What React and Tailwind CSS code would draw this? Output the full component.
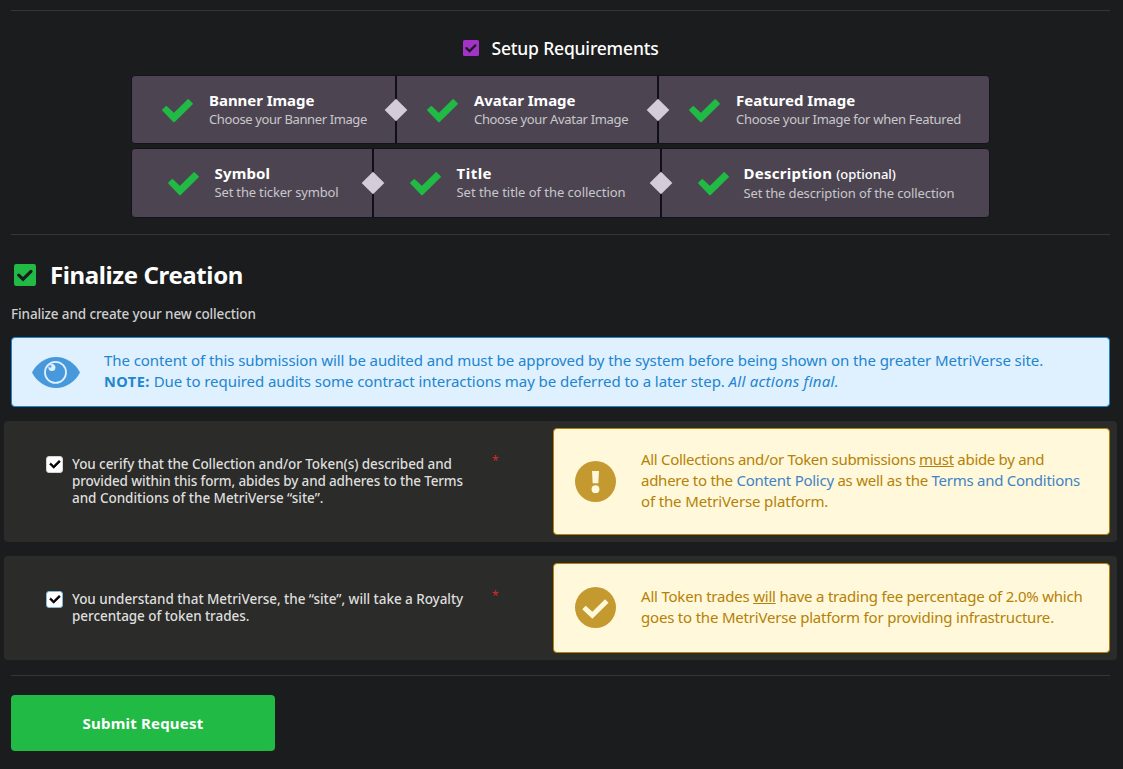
import React from "react";

const bannerSteps = [
  { title: "Banner Image", text: "Choose your Banner Image", spacing: "tracking-[-0.39px]", titleSpacing: "tracking-[-0.04px]" },
  { title: "Avatar Image", text: "Choose your Avatar Image", spacing: "tracking-[-0.34px]", titleSpacing: "tracking-[-0.04px]" },
  { title: "Featured Image", text: "Choose your Image for when Featured", spacing: "tracking-[-0.3px]", titleSpacing: "tracking-[0.02px]" },
];

const detailSteps = [
  { title: "Symbol", text: "Set the ticker symbol", spacing: "tracking-[-0.17px]", titleSpacing: "tracking-[0.15px]", offset: "mb-[2px]" },
  { title: "Title", text: "Set the title of the collection", spacing: "tracking-[-0.04px]", titleSpacing: "tracking-[0.5px]", offset: "mb-[2px]" },
  { title: "Description", optional: true, text: "Set the description of the collection", spacing: "tracking-[-0.12px]", titleSpacing: "tracking-[0.25px]", offset: "-ml-px" },
];

function Check({ className }) {
  return (
    <svg viewBox="0 0 31 24" className={`shrink-0 ${className}`}>
      <path
        d="M1.2 11 4.2 8.1 11.9 15.3 26.2 1.1 29.8 4.7 12 22.2z"
        fill="currentColor"
        stroke="currentColor"
        strokeWidth="2"
        strokeLinejoin="round"
      />
    </svg>
  );
}

function CheckSquare({ className }) {
  return (
    <svg viewBox="0 0 22 22" className={`shrink-0 ${className}`}>
      <rect width="22" height="22" rx="2.2" fill="currentColor" />
      <path d="M4.7 11.2 9 15.2 17 7.4" fill="none" stroke="#1b1c1d" strokeWidth="3.2" strokeLinecap="round" />
    </svg>
  );
}

function EyeIcon() {
  return (
    <svg viewBox="0 0 48 31" className="h-[31px] w-12 shrink-0">
      <path d="M0 15.5C5 6 14 0 24 0s19 6 24 15.5C43 25 34 31 24 31S5 25 0 15.5z" fill="#4799db" />
      <circle cx="23.5" cy="15.4" r="10.5" fill="none" stroke="#dff0ff" strokeWidth="1.8" />
      <circle cx="19.9" cy="10.6" r="3.5" fill="#dff0ff" />
      <circle cx="18.2" cy="9.4" r="1.2" fill="#4799db" />
    </svg>
  );
}

function ExclamationCircle() {
  return (
    <svg viewBox="0 0 41 41" className="size-[41px] shrink-0">
      <circle cx="20.5" cy="20.5" r="20.5" fill="#c49a30" />
      <path d="M17 10h7l-.7 12.3h-5.6z" fill="#fff8db" />
      <circle cx="20.5" cy="28.2" r="3.9" fill="#fff8db" />
    </svg>
  );
}

function CheckCircle() {
  return (
    <svg viewBox="0 0 41 41" className="size-[41px] shrink-0">
      <circle cx="20.5" cy="20.5" r="20.5" fill="#c49a30" />
      <path d="M9 20.5 17.3 28.2 31.8 14" fill="none" stroke="#fff8db" strokeWidth="5" />
    </svg>
  );
}

function Steps({ steps, className }) {
  return (
    <div className={`grid w-[859px] rounded-[4px] border border-[#14131c] bg-[#4c4551] ${className}`}>
      {steps.map((step, i) => (
        <div
          key={step.title}
          className={`relative flex items-center whitespace-nowrap ${i < 2 ? "border-r-2 border-[#100e18]" : ""}`}
        >
          <Check className="mt-[2px] mr-4 h-6 w-[31px] text-[#21ba45]" />
          <div className={step.offset}>
            <div className="text-[15px] leading-[19px] font-bold text-white">
              <span className={step.titleSpacing}>{step.title}</span>
              {step.optional && <span className="ml-1 text-[13px] font-medium">(optional)</span>}
            </div>
            <div className={`text-[13px] leading-[18px] text-[#c9c7cb] ${step.spacing}`}>{step.text}</div>
          </div>
          {i < 2 && (
            <span className="absolute top-1/2 -right-[9px] z-10 size-4 -translate-y-1/2 rotate-45 bg-[#d4cdd9]" />
          )}
        </div>
      ))}
    </div>
  );
}

function Checkbox({ focused }) {
  return (
    <span
      className={`flex size-[17px] shrink-0 items-center justify-center rounded-[3px] border bg-white ${focused ? "border-[#85b7d9]" : "border-[#d4d4d5]"}`}
    >
      <Check className="-mt-px h-[9px] w-3 text-black" />
    </span>
  );
}

function Agreement({ lines, focused, className, children }) {
  return (
    <section className={`-mx-[7px] flex rounded-[4px] bg-[#2b2b29] p-[7px] ${className}`}>
      <div className="flex w-[542px] items-start pt-[28px] pl-[35px]">
        <Checkbox focused={focused} />
        <div className="ml-[9px] w-[420px] text-[13.5px] leading-[17px] font-medium whitespace-nowrap text-[#dededd]">
          {lines.map(([text, spacing]) => (
            <div key={text} className={spacing}>{text}</div>
          ))}
        </div>
        <span className="-mt-[2px] text-[12px] leading-[14px] text-[#db2828]">*</span>
      </div>
      <div className="flex flex-1 items-center rounded-[4px] border border-[#b58105] bg-[#fff8db] pb-px pl-[21px] text-[15px] leading-[21px] whitespace-nowrap text-[#b58105]">
        {children}
      </div>
    </section>
  );
}

export default function App() {
  return (
    <main className="h-[769px] overflow-hidden bg-[#1b1c1d] pt-[10px] pr-[13px] pl-[11px] font-['Noto_Sans',sans-serif]">
      <hr className="border-[#353637]" />
      <section className="flex flex-col items-center">
        <h3 className="mt-[25px] mb-[14px] flex h-[25px] items-center pl-px text-[17.5px] font-medium text-white">
          <CheckSquare className="mr-[12px] mb-px size-4 text-[#a333c8]" />
          <span className="tracking-[-0.18px]">Setup Requirements</span>
        </h3>
        <Steps steps={bannerSteps} className="h-[69px] grid-cols-[265px_262px_1fr] *:pl-[30px]" />
        <Steps steps={detailSteps} className="mt-1 h-[70px] grid-cols-[242px_288px_1fr] *:pl-[35.5px]" />
      </section>
      <hr className="mt-[16px] border-[#353637]" />
      <h2 className="mt-[22px] flex h-[36px] items-center text-[24px] font-bold text-white">
        <CheckSquare className="mr-[14px] ml-[3px] size-[22px] text-[#21ba45]" />
        <span className="tracking-[-0.39px]">Finalize Creation</span>
      </h2>
      <p className="mt-[11px] text-[13.5px] leading-[20px] font-medium tracking-[-0.12px] text-[#cfcfcf]">
        Finalize and create your new collection
      </p>
      <section className="mt-[13px] flex h-[70px] items-center rounded-[4px] border border-[#2185d0] bg-[#dff0ff] pl-5 text-[15px] leading-[21px] whitespace-nowrap text-[#2185d0]">
        <EyeIcon />
        <div className="mb-[3px] ml-[24px]">
          <div className="tracking-[-0.08px]">
            The content of this submission will be audited and must be approved by the system before being shown on the greater MetriVerse site.
          </div>
          <div className="tracking-[-0.06px]">
            <b className="text-[14.5px] tracking-[0.5px]">NOTE:</b> Due to required audits some contract interactions may be deferred to a later step.{" "}
            <i className="tracking-[0.27px]">All actions final.</i>
          </div>
        </div>
      </section>
      <Agreement
        className="mt-[14px] h-[121px]"
        lines={[
          ["You cerify that the Collection and/or Token(s) described and", "tracking-[-0.08px]"],
          ["provided within this form, abides by and adheres to the Terms", "tracking-[-0.15px]"],
          ["and Conditions of the MetriVerse “site”.", "tracking-[-0.04px]"],
        ]}
      >
        <ExclamationCircle />
        <div className="mb-px ml-[25px]">
          <div className="tracking-[-0.31px]">
            All Collections and/or Token submissions <u>must</u> abide by and
          </div>
          <div className="tracking-[-0.26px]">
            adhere to the <a className="text-[#4183c4]">Content Policy</a> as well as the{" "}
            <a className="text-[#4183c4]">Terms and Conditions</a>
          </div>
          <div className="tracking-[-0.14px]">of the MetriVerse platform.</div>
        </div>
      </Agreement>
      <Agreement
        focused
        className="mt-[14px] h-[104px]"
        lines={[
          ["You understand that MetriVerse, the “site”, will take a Royalty", "tracking-[-0.05px]"],
          ["percentage of token trades.", "tracking-[-0.06px]"],
        ]}
      >
        <CheckCircle />
        <div className="mb-[2px] ml-[25px]">
          <div className="tracking-[-0.21px]">
            All Token trades <u>will</u> have a trading fee percentage of 2.0% which
          </div>
          <div className="tracking-[-0.2px]">goes to the MetriVerse platform for providing infrastructure.</div>
        </div>
      </Agreement>
      <hr className="mt-[15px] border-[#353637]" />
      <button className="mt-[19px] h-[56px] w-[264px] rounded-[4px] bg-[#21ba45] text-[15px] font-bold tracking-[0.2px] text-white">
        Submit Request
      </button>
    </main>
  );
}
